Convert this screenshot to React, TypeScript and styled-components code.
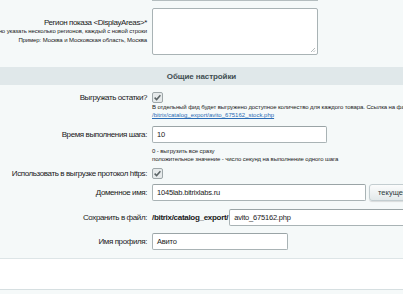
import React from "react";
import styled, { createGlobalStyle } from "styled-components";

const Global = createGlobalStyle`
  html, body { margin: 0; padding: 0; overflow: hidden; }
  body {
    background: #f5f9f9;
    font-family: "Liberation Sans", Arial, sans-serif;
    color: #1a1a1a;
  }
`;

const Page = styled.div`
  width: 403px;
  height: 294px;
  overflow: hidden;
  display: flex;
  flex-direction: column;
`;

const Form = styled.div`
  background: #f5f9f9;
  display: flex;
  flex-direction: column;
  padding-bottom: 8px;
  border-bottom: 1px solid #dde5e7;
`;

const Row = styled.div<{ $top?: number; $align?: string }>`
  display: grid;
  grid-template-columns: 147px 1fr;
  column-gap: 5px;
  align-items: ${({ $align }) => $align || "center"};
  padding-top: ${({ $top }) => $top || 0}px;
`;

const Label = styled.div`
  display: flex;
  flex-direction: column;
  align-items: flex-end;
  font-size: 8px;
  letter-spacing: -0.4px;
  line-height: 9px;
  white-space: nowrap;
  min-width: 0;
`;

const LabelHint = styled.span`
  font-size: 6px;
  letter-spacing: -0.1px;
  line-height: 9px;
`;

const Field = styled.div`
  display: flex;
  align-items: center;
  min-width: 0;
  white-space: nowrap;
`;

const FieldCol = styled.div`
  display: flex;
  flex-direction: column;
  min-width: 0;
  white-space: nowrap;
`;

const PrevBottom = styled.div`
  margin-left: 152px;
  width: 166px;
  height: 1px;
  background: #b4bdbf;
`;

const TextArea = styled.div`
  width: 164px;
  height: 45px;
  background: #fff;
  border: 1px solid #a9b3b5;
  border-radius: 2px;
  position: relative;
`;

const Grip = styled.svg`
  position: absolute;
  right: 1px;
  bottom: 1px;
`;

const Header = styled.div`
  margin-top: 12px;
  height: 18px;
  background: #e0e8ea;
  display: flex;
  align-items: center;
  justify-content: center;
  font-size: 8px;
  font-weight: bold;
  color: #3f4d51;
  letter-spacing: -0.1px;
`;

const Input = styled.div<{ $w: number }>`
  width: ${({ $w }) => $w}px;
  height: 15px;
  box-sizing: content-box;
  background: #fff;
  border: 1px solid #a9b3b5;
  border-top-color: #9aa4a6;
  border-radius: 2px;
  display: flex;
  align-items: center;
  padding-left: 4px;
  font-size: 7.5px;
  letter-spacing: -0.2px;
  flex-shrink: 0;
`;

const Hint = styled.div`
  font-size: 6px;
  line-height: 8px;
  letter-spacing: -0.1px;
  color: #222;
`;

const Link = styled.a`
  font-size: 6px;
  line-height: 8px;
  color: #2a6cb5;
  text-decoration: underline;
`;

const Bold = styled.span`
  font-size: 8px;
  font-weight: bold;
  letter-spacing: -0.3px;
  margin-right: 1px;
`;

const Button = styled.div`
  margin-left: 3px;
  height: 15px;
  padding: 0 8px;
  border: 1px solid #c3cdd0;
  border-radius: 3px;
  background: linear-gradient(#fbfcfc, #e3e9ea);
  box-shadow: 0 1px 1px rgba(0, 0, 0, 0.12);
  display: flex;
  align-items: center;
  font-size: 7.5px;
  color: #2b3a3e;
  flex-shrink: 0;
`;

const Footer = styled.div`
  height: 30px;
  background: #fff;
  border-bottom: 1px solid #d6dfe1;
`;

const Check = () => (
  <svg width="11" height="11" viewBox="0 0 11 11">
    <rect x="0.5" y="0.5" width="10" height="10" rx="1.5" fill="#e6eaeb" stroke="#9ea7a9" />
    <path d="M2.6 5.6 L4.6 7.6 L8.4 3.2" fill="none" stroke="#5b6466" strokeWidth="1.5" />
  </svg>
);

export default function App() {
  return (
    <Page>
      <Global />
      <Form>
        <PrevBottom />
        <Row $top={7}>
          <Label>
            <span>Регион показа &lt;DisplayAreas&gt;*</span>
            <LabelHint>Можно указать несколько регионов, каждый с новой строки</LabelHint>
            <LabelHint>Пример: Москва и Московская область, Москва</LabelHint>
          </Label>
          <Field>
            <TextArea>
              <Grip width="6" height="6" viewBox="0 0 6 6">
                <path d="M5 1 L1 5 M5 3.5 L3.5 5" stroke="#a0a8aa" strokeWidth="0.8" />
              </Grip>
            </TextArea>
          </Field>
        </Row>
        <Header>Общие настройки</Header>
        <Row $top={7} $align="start">
          <Label style={{ lineHeight: "11px" }}>Выгружать остатки?</Label>
          <FieldCol>
            <Check />
            <Hint>
              В отдельный фид будет выгружено доступное количество для каждого товара. Ссылка на файл:
            </Hint>
            <Link>/bitrix/catalog_export/avito_675162_stock.php</Link>
          </FieldCol>
        </Row>
        <Row $top={7}>
          <Label>Время выполнения шага:</Label>
          <Field>
            <Input $w={169}>10</Input>
          </Field>
        </Row>
        <Row $top={4}>
          <div />
          <FieldCol>
            <Hint>0 - выгрузить все сразу</Hint>
            <Hint>положительное значение - число секунд на выполнение одного шага</Hint>
          </FieldCol>
        </Row>
        <Row $top={5}>
          <Label>Использовать в выгрузке протокол https:</Label>
          <Field>
            <Check />
          </Field>
        </Row>
        <Row $top={5}>
          <Label>Доменное имя:</Label>
          <Field>
            <Input $w={208}>1045lab.bitrixlabs.ru</Input>
            <Button>текущее</Button>
          </Field>
        </Row>
        <Row $top={8}>
          <Label>Сохранить в файл:</Label>
          <Field>
            <Bold>/bitrix/catalog_export/</Bold>
            <Input $w={190}>avito_675162.php</Input>
          </Field>
        </Row>
        <Row $top={7}>
          <Label>Имя профиля:</Label>
          <Field>
            <Input $w={130}>Авито</Input>
          </Field>
        </Row>
      </Form>
      <Footer />
    </Page>
  );
}
